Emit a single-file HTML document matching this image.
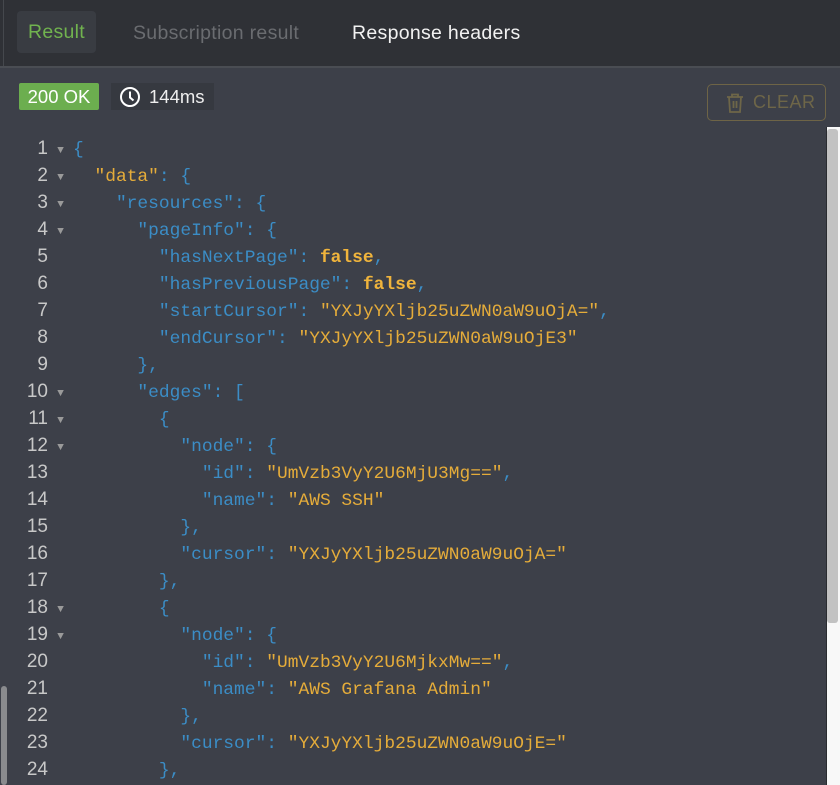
<!DOCTYPE html>
<html><head><style>
html,body{margin:0;padding:0;width:840px;height:785px;overflow:hidden;background:#3d4049;font-family:"Liberation Sans",sans-serif}
.top{position:absolute;left:0;top:0;width:840px;height:66px;background:#2f3136;border-bottom:2px solid #4a4d53}
.vl{position:absolute;left:3px;top:0;width:1px;height:66px;background:#45484d}
.tab{position:absolute;top:12px;height:42px;line-height:42px;font-size:19.5px;letter-spacing:0.3px}
.b200{position:absolute;left:19px;top:83px;width:80px;height:27px;background:#6cae4f;color:#fff;font-size:18.5px;line-height:27px;text-align:center;border-radius:2px}
.tm{position:absolute;left:111px;top:83px;width:103px;height:27px;background:#363940;color:#eee;font-size:18.5px;line-height:27px}
.clr{position:absolute;left:707px;top:84px;width:119px;height:37px;border:1px solid #6e6446;border-radius:5px;box-sizing:border-box;color:#6e6648;font-size:18px;line-height:35px;letter-spacing:0.5px}
.code{position:absolute;left:0;top:135px;font-family:"Liberation Mono",monospace;font-size:17.9px;color:#3b8dc6}
.code div{height:27px;line-height:27px;white-space:pre;overflow:hidden}
.ln{display:inline-block;width:48px;text-align:right;color:#c8c8c8;font-family:"Liberation Sans",sans-serif;font-size:19px;line-height:27px}
.ar{display:inline-block;width:25px;color:#9a9a9a;font-size:11px;text-align:center;line-height:27px;vertical-align:top;position:relative;top:3px}
.s{color:#e5ac3a}.f{color:#f0b43c;font-weight:bold}
.sb{position:absolute;left:826px;top:127px;width:14px;height:658px;background:#f8f8f8;border-left:1px solid #2a2c30}
.th{position:absolute;left:827px;top:129px;width:11px;height:494px;background:#c2c2c2;border-radius:3px}
.lsb{position:absolute;left:1px;top:686px;width:6px;height:99px;background:#8a8b8e;border-radius:3px}
</style></head><body>
<div class="top"><div class="vl"></div>
<div class="tab" style="left:17px;width:79px;background:#393c42;border-radius:4px;color:#71b34f;text-align:center;top:11px">Result</div>
<div class="tab" style="left:133px;color:#6a6c70">Subscription result</div>
<div class="tab" style="left:352px;color:#f2f2f2">Response headers</div>
</div>
<div class="b200">200 OK</div>
<div class="tm"><svg style="position:absolute;left:8px;top:3px" width="22" height="22" viewBox="0 0 22 22"><circle cx="11" cy="11" r="9" fill="none" stroke="#fff" stroke-width="2"/><path d="M11 5.5V11.5L14.5 14.5" fill="none" stroke="#fff" stroke-width="2"/></svg><span style="position:absolute;left:38px">144ms</span></div>
<div class="clr"><svg style="position:absolute;left:17px;top:7px" width="20" height="22" viewBox="0 0 20 22"><path d="M2 5H18M7 5V2.5H13V5M4 5L5 20H15L16 5M8.5 9V16M11.5 9V16" fill="none" stroke="#6e6648" stroke-width="1.8"/></svg><span style="position:absolute;left:45px">CLEAR</span></div>
<div class="code">
<div><span class="ln">1</span><span class="ar">▼</span>{</div>
<div><span class="ln">2</span><span class="ar">▼</span>  <span class="s">"data"</span>: {</div>
<div><span class="ln">3</span><span class="ar">▼</span>    "resources": {</div>
<div><span class="ln">4</span><span class="ar">▼</span>      "pageInfo": {</div>
<div><span class="ln">5</span><span class="ar"> </span>        "hasNextPage": <span class="f">false</span>,</div>
<div><span class="ln">6</span><span class="ar"> </span>        "hasPreviousPage": <span class="f">false</span>,</div>
<div><span class="ln">7</span><span class="ar"> </span>        "startCursor": <span class="s">"YXJyYXljb25uZWN0aW9uOjA="</span>,</div>
<div><span class="ln">8</span><span class="ar"> </span>        "endCursor": <span class="s">"YXJyYXljb25uZWN0aW9uOjE3"</span></div>
<div><span class="ln">9</span><span class="ar"> </span>      },</div>
<div><span class="ln">10</span><span class="ar">▼</span>      "edges": [</div>
<div><span class="ln">11</span><span class="ar">▼</span>        {</div>
<div><span class="ln">12</span><span class="ar">▼</span>          "node": {</div>
<div><span class="ln">13</span><span class="ar"> </span>            "id": <span class="s">"UmVzb3VyY2U6MjU3Mg=="</span>,</div>
<div><span class="ln">14</span><span class="ar"> </span>            "name": <span class="s">"AWS SSH"</span></div>
<div><span class="ln">15</span><span class="ar"> </span>          },</div>
<div><span class="ln">16</span><span class="ar"> </span>          "cursor": <span class="s">"YXJyYXljb25uZWN0aW9uOjA="</span></div>
<div><span class="ln">17</span><span class="ar"> </span>        },</div>
<div><span class="ln">18</span><span class="ar">▼</span>        {</div>
<div><span class="ln">19</span><span class="ar">▼</span>          "node": {</div>
<div><span class="ln">20</span><span class="ar"> </span>            "id": <span class="s">"UmVzb3VyY2U6MjkxMw=="</span>,</div>
<div><span class="ln">21</span><span class="ar"> </span>            "name": <span class="s">"AWS Grafana Admin"</span></div>
<div><span class="ln">22</span><span class="ar"> </span>          },</div>
<div><span class="ln">23</span><span class="ar"> </span>          "cursor": <span class="s">"YXJyYXljb25uZWN0aW9uOjE="</span></div>
<div><span class="ln">24</span><span class="ar"> </span>        },</div>
</div>
<div class="sb"></div><div class="th"></div><div class="lsb"></div>
</body></html>
